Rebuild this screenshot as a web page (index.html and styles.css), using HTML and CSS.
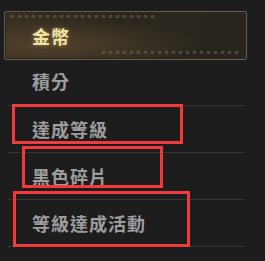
FILE: index.html
```html
<!DOCTYPE html>
<html lang="zh-Hant">
<head>
  <meta charset="UTF-8" />
  <meta name="viewport" content="width=device-width, initial-scale=1" />
  <title>Menu</title>
  <link rel="stylesheet" href="styles.css">
</head>
<body>
  <div class="menu">
    <div class="tab active">金幣</div>
    <div class="row first">積分</div>
    <div class="row">達成等級</div>
    <div class="row">黑色碎片</div>
    <div class="row">等級達成活動</div>

    <div class="mark mark-1"></div>
    <div class="mark mark-2"></div>
    <div class="mark mark-3"></div>
  </div>
</body>
</html>
```

FILE: styles.css
```css
body {
  margin: 0;
  background: #1d1d1d;
  font-family: "Noto Sans CJK TC", "Noto Sans", sans-serif;
  font-weight: bold;
  width: 265px;
  height: 261px;
  overflow: hidden;
  padding-top: 1px;
  box-sizing: border-box;
}
.menu {
  position: relative;
  width: 243px;
  margin: 10px 0 0 4px;
}
.tab {
  position: relative;
  height: 49px;
  box-sizing: border-box;
  display: flex;
  align-items: center;
  padding-left: 27px;
  font-size: 18px;
  letter-spacing: 1px;
  color: #f3e3a6;
  text-shadow: 0 0 4px rgba(240, 210, 120, 0.45);
  border: 1px solid #6a5e4c;
  border-radius: 2px;
  background:
    radial-gradient(ellipse at 18% 70%, rgba(110, 88, 52, 0.5), transparent 55%),
    linear-gradient(90deg, #372f21 0%, #2d281f 45%, #28241d 100%);
  box-shadow: inset 0 0 0 1px #2a2418;
}
.tab::before,
.tab::after {
  content: "";
  position: absolute;
  height: 3px;
  background: radial-gradient(circle, rgba(130, 120, 100, 0.4) 40%, transparent 60%) 0 0 / 7px 3px repeat-x;
}
.tab::before {
  top: 3px;
  left: 4px;
  width: 148px;
}
.tab::after {
  bottom: 5px;
  left: 95px;
  width: 142px;
}
.row {
  margin: 0 2px 0 3px;
  height: 47px;
  box-sizing: border-box;
  display: flex;
  align-items: center;
  padding-left: 25px;
  font-size: 18px;
  letter-spacing: 1px;
  color: #9d9d9d;
  border-bottom: 1px solid #363636;
}
.row.first {
  height: 46px;
  padding-bottom: 3px;
}
.mark {
  position: absolute;
  border: 3px solid #f23a3a;
  box-sizing: border-box;
}
.mark-1 {
  left: 8px;
  top: 93px;
  width: 171px;
  height: 40px;
}
.mark-2 {
  left: 18px;
  top: 135px;
  width: 141px;
  height: 42px;
}
.mark-3 {
  left: 9px;
  top: 180px;
  width: 177px;
  height: 56px;
}
```
